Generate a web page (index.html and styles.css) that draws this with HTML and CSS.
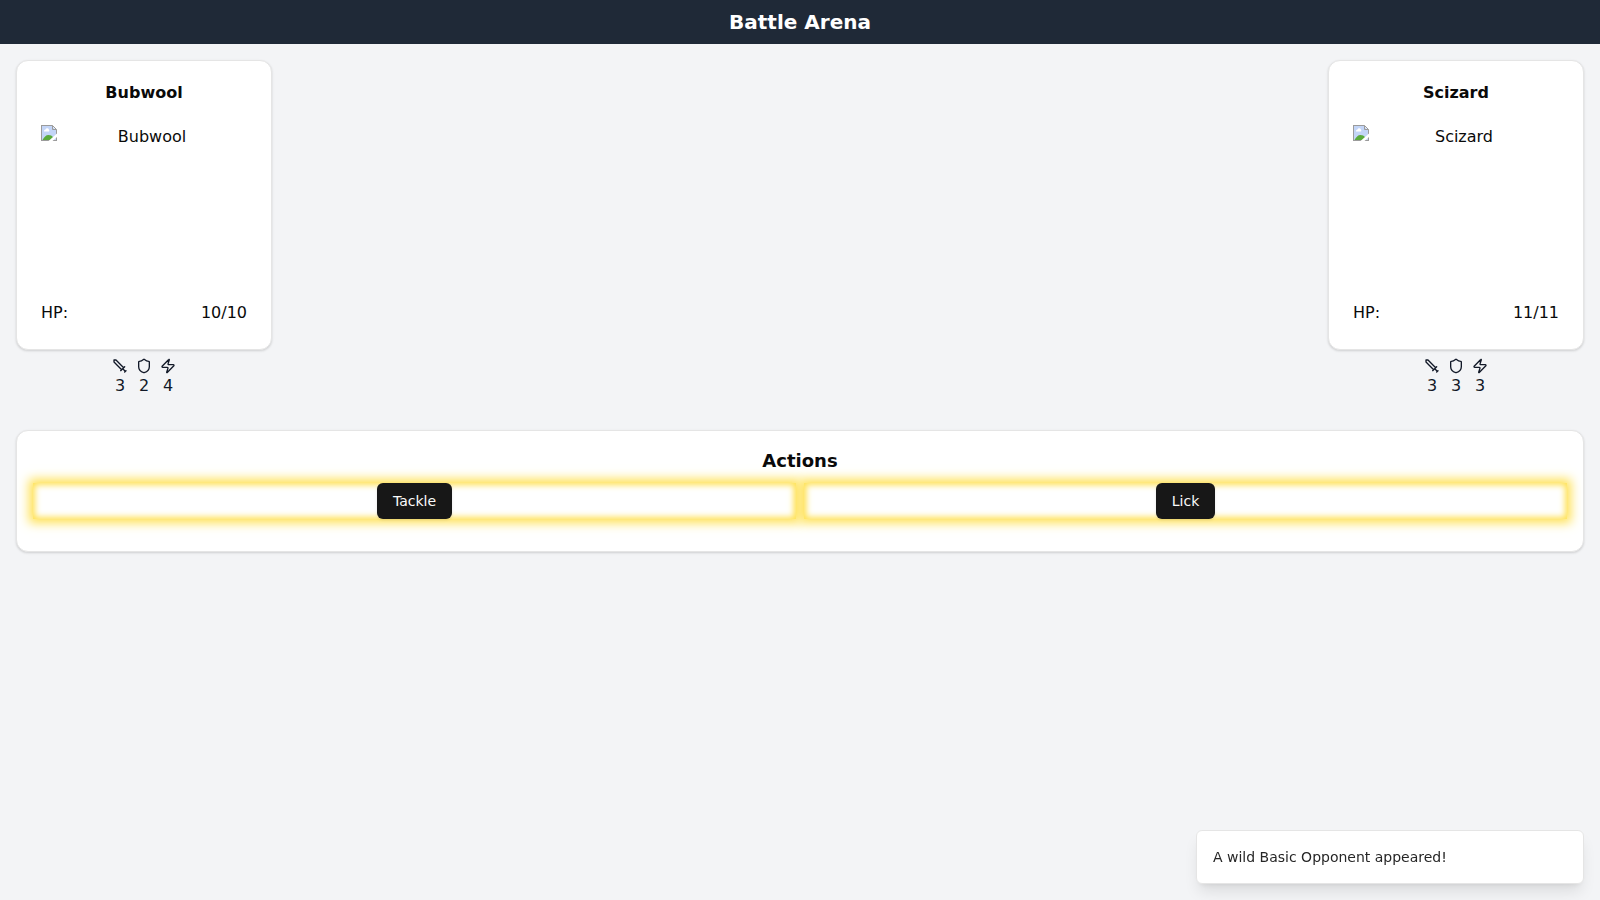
FILE: index.html
```html
<!DOCTYPE html>
<html lang="en">
<head>
<meta charset="utf-8">
<meta name="viewport" content="width=device-width, initial-scale=1">
<title>Battle Arena</title>
<link rel="stylesheet" href="styles.css">
</head>
<body>
<svg class="sprite" aria-hidden="true">
  <symbol id="sword" viewBox="0 0 24 24"><path d="M14.5 17.5 3 6V3h3l11.5 11.5M13 19l6-6M16 16l4 4M19 21l2-2"/></symbol>
  <symbol id="shield" viewBox="0 0 24 24"><path d="M20 13c0 5-3.500 7.500-7.660 8.950a1 1 0 0 1-.67-.01C7.500 20.500 4 18 4 13V6a1 1 0 0 1 1-1c2 0 4.500-1.200 6.240-2.720a1.170 1.170 0 0 1 1.520 0C14.510 3.810 17 5 19 5a1 1 0 0 1 1 1z"/></symbol>
  <symbol id="zap" viewBox="0 0 24 24"><path d="M4 14a1 1 0 0 1-.78-1.630l9.900-10.200a.5.5 0 0 1 .86.46l-1.920 6.020A1 1 0 0 0 13 10h7a1 1 0 0 1 .78 1.630l-9.900 10.200a.5.5 0 0 1-.86-.46l1.920-6.020A1 1 0 0 0 11 14z"/></symbol>
  <symbol id="missing" viewBox="0 0 16 16">
    <path fill="#c3d5f7" d="M1 1h10l4 4v10H1z"/>
    <path fill="#fff" d="M3 6a1.500 1.500 0 0 1 1.500-1.500A1.800 1.800 0 0 1 8 5a1 1 0 0 1 0 1.500H3z"/>
    <path fill="#5aab3c" d="M1.500 15c1.500-3 3.500-5 6-5 2 0 3.500.8 4.500 2.200V15z"/>
    <path fill="none" stroke="#9b9b9b" d="M.5 0v16M0 .5h11.500M0 15.500h16M15.500 4.500V16M11.500.5v4h4M11.500.5l4 4"/>
    <path fill="#fff" d="M16 8.500V12l-4.500 4H7.500zM12.500 0H16v3.500z"/>
  </symbol>
</svg>
<header class="topbar"><h1 class="topbar-title">Battle Arena</h1></header>
<main class="arena">
  <section class="fighters">
    <article class="fighter">
      <div class="card fighter-card">
        <h2 class="fighter-name">Bubwool</h2>
        <div class="portrait"><svg class="portrait-icon" aria-hidden="true"><use href="#missing"/></svg><span class="portrait-label">Bubwool</span></div>
        <div class="hp"><span>HP:</span><span>10/10</span></div>
      </div>
      <div class="stats">
        <div class="stat"><svg class="icon" role="img" aria-label="Attack"><use href="#sword"/></svg><span>3</span></div>
        <div class="stat"><svg class="icon" role="img" aria-label="Defense"><use href="#shield"/></svg><span>2</span></div>
        <div class="stat"><svg class="icon" role="img" aria-label="Speed"><use href="#zap"/></svg><span>4</span></div>
      </div>
    </article>
    <article class="fighter">
      <div class="card fighter-card">
        <h2 class="fighter-name">Scizard</h2>
        <div class="portrait"><svg class="portrait-icon" aria-hidden="true"><use href="#missing"/></svg><span class="portrait-label">Scizard</span></div>
        <div class="hp"><span>HP:</span><span>11/11</span></div>
      </div>
      <div class="stats">
        <div class="stat"><svg class="icon" role="img" aria-label="Attack"><use href="#sword"/></svg><span>3</span></div>
        <div class="stat"><svg class="icon" role="img" aria-label="Defense"><use href="#shield"/></svg><span>3</span></div>
        <div class="stat"><svg class="icon" role="img" aria-label="Speed"><use href="#zap"/></svg><span>3</span></div>
      </div>
    </article>
  </section>
  <section class="card actions">
    <h2 class="actions-title">Actions</h2>
    <div class="action-grid">
      <div class="action"><button class="button" type="button">Tackle</button></div>
      <div class="action"><button class="button" type="button">Lick</button></div>
    </div>
  </section>
</main>
<div class="toast" role="status">A wild Basic Opponent appeared!</div>
</body>
</html>
```
FILE: styles.css
```css
* { box-sizing: border-box; }

body {
  margin: 0;
  min-height: 100vh;
  background: #f3f4f6;
  color: #0a0a0a;
  font: 16px/24px "DejaVu Sans", sans-serif;
}

h1, h2 { margin: 0; }

.sprite {
  position: absolute;
  width: 0;
  height: 0;
}

.topbar {
  padding: 8px;
  background: #1f2937;
  color: #fff;
  text-align: center;
}

.topbar-title { font-size: 20px; line-height: 28px; }

.arena {
  display: flex;
  flex-direction: column;
  gap: 32px;
  padding: 16px;
}

.card {
  background: #fff;
  border: 1px solid #e5e5e5;
  border-radius: 12px;
  box-shadow: 0 1px 3px rgba(0, 0, 0, 0.1), 0 1px 2px rgba(0, 0, 0, 0.06);
}

.fighters { display: flex; justify-content: space-between; }

.fighter {
  display: flex;
  flex-direction: column;
  gap: 8px;
  width: 256px;
}

.fighter-card {
  display: flex;
  flex-direction: column;
  padding: 24px;
}

.fighter-name {
  margin-bottom: 24px;
  font-size: 16px;
  line-height: 16px;
  text-align: center;
}

.portrait {
  display: flex;
  height: 160px;
  margin-bottom: 16px;
  text-align: center;
}

.portrait-icon { width: 16px; height: 16px; }
.portrait-label { flex: 1; }

.hp { display: flex; justify-content: space-between; }

.stats {
  display: flex;
  justify-content: center;
  gap: 8px;
  color: #111827;
}

.stat {
  display: flex;
  flex-direction: column;
  align-items: center;
  width: 16px;
}

.icon {
  width: 16px;
  height: 16px;
  fill: none;
  stroke: currentColor;
  stroke-width: 2;
  stroke-linecap: round;
  stroke-linejoin: round;
}

.actions { padding: 16px 16px 32px; }

.actions-title {
  margin-bottom: 8px;
  font-size: 18px;
  line-height: 28px;
  text-align: center;
}

.action-grid {
  display: grid;
  grid-template-columns: 1fr 1fr;
  gap: 8px;
}

.action {
  display: flex;
  justify-content: center;
  box-shadow: 0 0 10px 4px #ffe152, inset 0 0 6px 2px #ffe152;
}

.button {
  height: 36px;
  padding: 0 16px;
  border: 0;
  border-radius: 6px;
  background: #171717;
  color: #fafafa;
  font: 14px/20px "DejaVu Sans", sans-serif;
  box-shadow: 0 1px 3px rgba(0, 0, 0, 0.1);
}

.toast {
  position: fixed;
  right: 16px;
  bottom: 16px;
  width: 388px;
  max-width: calc(100% - 32px);
  padding: 16px;
  border: 1px solid #e5e5e5;
  border-radius: 6px;
  background: #fff;
  color: #262626;
  font-size: 14px;
  line-height: 20px;
  box-shadow: 0 10px 15px -3px rgba(0, 0, 0, 0.1), 0 4px 6px -4px rgba(0, 0, 0, 0.1);
}
```
